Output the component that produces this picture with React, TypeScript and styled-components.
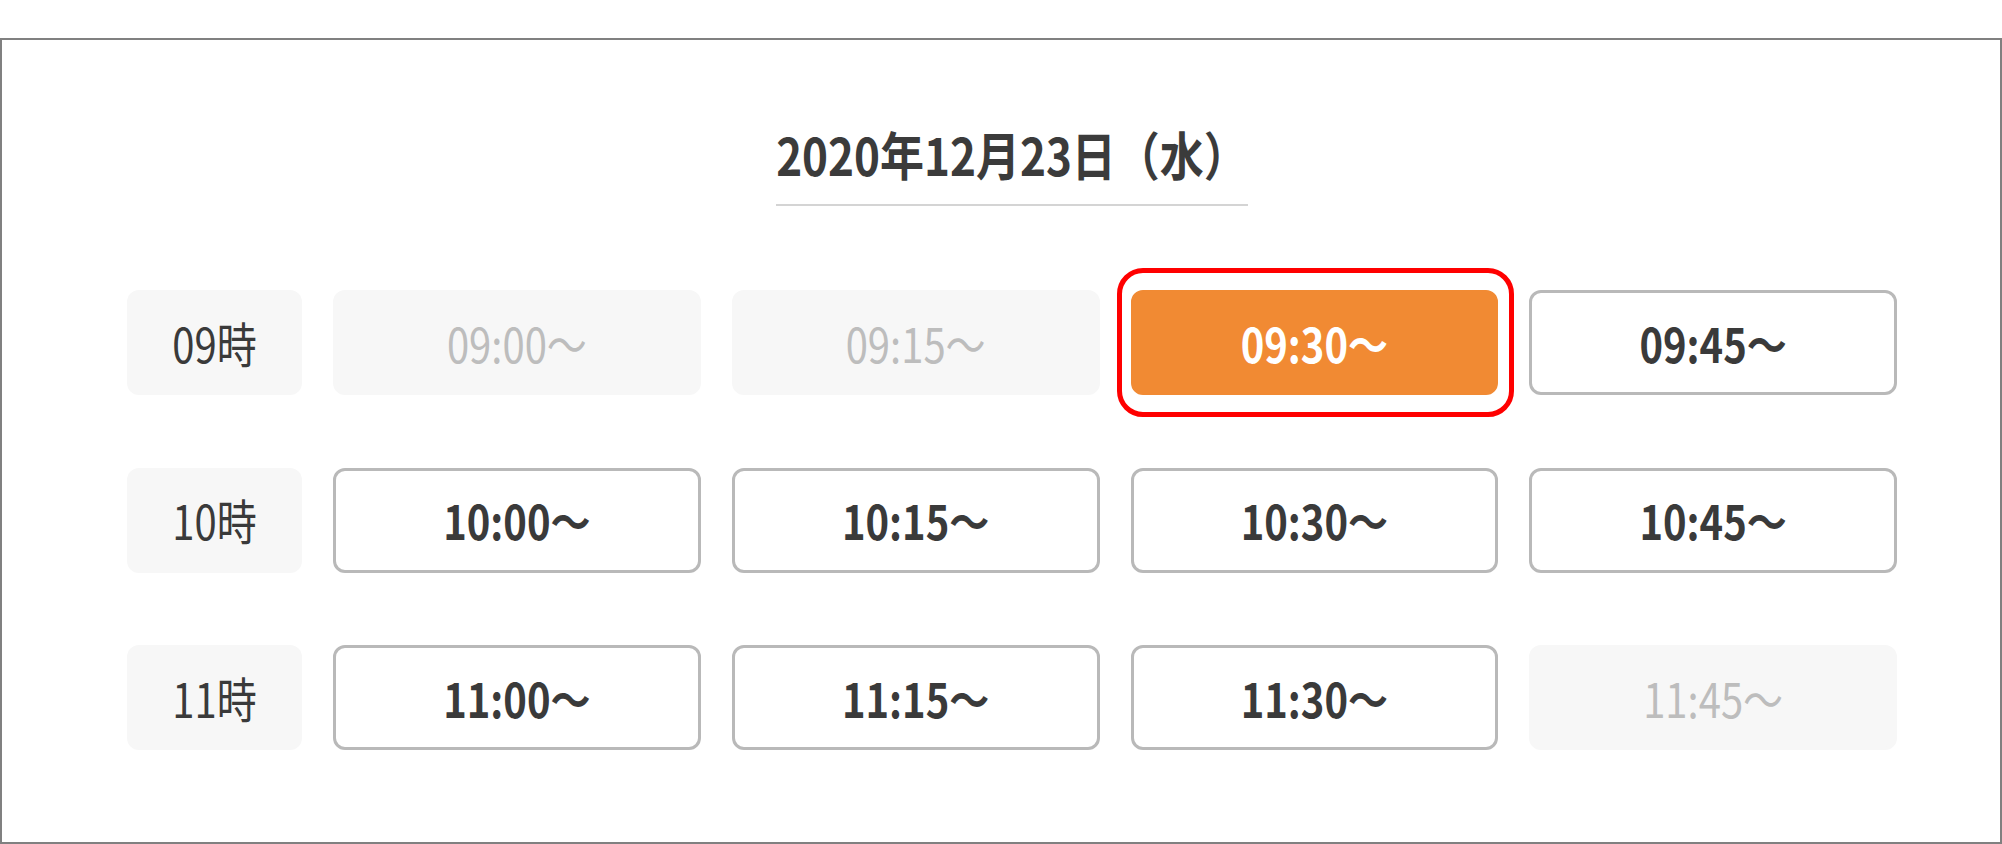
import React from 'react';
import styled, { createGlobalStyle } from 'styled-components';

const GlobalStyle = createGlobalStyle`
  body {
    margin: 0;
    background: #ffffff;
    font-family: 'Noto Sans CJK JP', 'Noto Sans', sans-serif;
  }
`;

const Page = styled.div`
  padding-top: 38px;
`;

const Frame = styled.section`
  box-sizing: border-box;
  height: 806px;
  border: 2px solid #808080;
  padding: 88px 103px 0 125px;
  display: flex;
  flex-direction: column;
  align-items: center;
`;

// the glyphs in the design are drawn a little taller than the font's own shape
const Tall = styled.span`
  display: inline-block;
  transform: scaleY(1.18);
`;

const Title = styled.h2`
  margin: 0 0 84px;
  padding-bottom: 24px;
  border-bottom: 2px solid #d4d4d4;
  font-size: 44px;
  line-height: 52px;
  font-weight: 700;
  color: #3b3b3b;
`;

const Grid = styled.div`
  width: 100%;
  display: grid;
  grid-template-columns: 175px repeat(4, 1fr);
  grid-auto-rows: 105px;
  column-gap: 31px;
  row-gap: 72.5px;
`;

const HourLabel = styled.div`
  display: flex;
  align-items: center;
  justify-content: center;
  border-radius: 12px;
  background: #f7f7f7;
  color: #3a3a3a;
  font-size: 40px;
  font-weight: 400;
`;

type SlotState = 'open' | 'closed' | 'selected';

const SlotCell = styled.div`
  position: relative;
  display: flex;
`;

const SlotButton = styled.button<{ $state: SlotState }>`
  flex: 1;
  box-sizing: border-box;
  display: flex;
  align-items: center;
  justify-content: center;
  border-radius: 12px;
  font-family: inherit;
  font-size: 40px;
  padding: 0;
  cursor: ${({ $state }) => ($state === 'closed' ? 'default' : 'pointer')};
  font-weight: ${({ $state }) => ($state === 'closed' ? 400 : 700)};
  color: ${({ $state }) =>
    $state === 'closed' ? '#bdbdbd' : $state === 'selected' ? '#ffffff' : '#3a3a3a'};
  background: ${({ $state }) =>
    $state === 'closed' ? '#f7f7f7' : $state === 'selected' ? '#f18a33' : '#ffffff'};
  border: 3px solid
    ${({ $state }) =>
      $state === 'closed' ? '#f7f7f7' : $state === 'selected' ? '#f18a33' : '#b9b9b9'};
`;

const Highlight = styled.span`
  position: absolute;
  top: -22px;
  bottom: -22px;
  left: -14px;
  right: -16px;
  border: 5px solid #ff0000;
  border-radius: 26px;
  pointer-events: none;
`;

type Row = {
  hour: string;
  slots: { time: string; state: SlotState }[];
};

const rows: Row[] = [
  {
    hour: '09時',
    slots: [
      { time: '09:00〜', state: 'closed' },
      { time: '09:15〜', state: 'closed' },
      { time: '09:30〜', state: 'selected' },
      { time: '09:45〜', state: 'open' },
    ],
  },
  {
    hour: '10時',
    slots: [
      { time: '10:00〜', state: 'open' },
      { time: '10:15〜', state: 'open' },
      { time: '10:30〜', state: 'open' },
      { time: '10:45〜', state: 'open' },
    ],
  },
  {
    hour: '11時',
    slots: [
      { time: '11:00〜', state: 'open' },
      { time: '11:15〜', state: 'open' },
      { time: '11:30〜', state: 'open' },
      { time: '11:45〜', state: 'closed' },
    ],
  },
];

export default function App() {
  return (
    <Page>
      <GlobalStyle />
      <Frame>
        <Title>
          <Tall>2020年12月23日（水）</Tall>
        </Title>
        <Grid>
          {rows.map((row) => (
            <React.Fragment key={row.hour}>
              <HourLabel>
                <Tall>{row.hour}</Tall>
              </HourLabel>
              {row.slots.map((slot) => (
                <SlotCell key={slot.time}>
                  <SlotButton $state={slot.state} disabled={slot.state === 'closed'}>
                    <Tall>{slot.time}</Tall>
                  </SlotButton>
                  {slot.state === 'selected' && <Highlight />}
                </SlotCell>
              ))}
            </React.Fragment>
          ))}
        </Grid>
      </Frame>
    </Page>
  );
}
